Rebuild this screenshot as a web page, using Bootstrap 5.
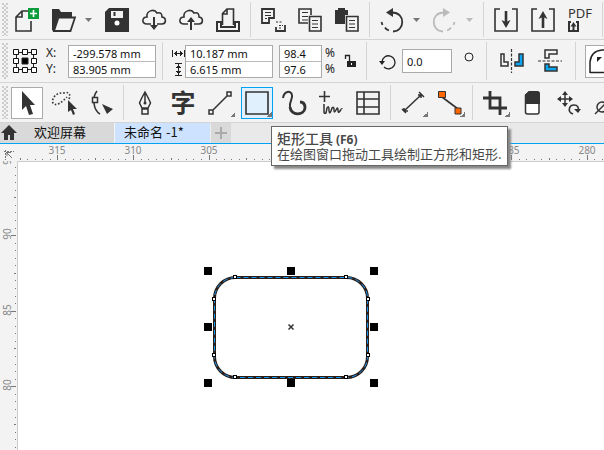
<!DOCTYPE html>
<html lang="zh-CN">
<head>
<meta charset="utf-8">
<meta name="viewport" content="width=device-width, initial-scale=1">
<title>未命名 -1*</title>
<link rel="stylesheet" href="https://cdn.jsdelivr.net/npm/bootstrap@5.3.0/dist/css/bootstrap.min.css">
<style>
:root{--ink:#333;--bar:#f3f3f3;--rule:#d4d4d4;--accent:#00a2f3}
body{font-family:"Noto Sans","Noto Sans CJK SC",sans-serif;font-size:11px;line-height:16px;color:#222;background:var(--bar)}
svg{display:block;overflow:visible}
.strip{background:var(--bar);border-bottom:1px solid var(--rule)}
.grip{width:6px;margin:3px 1px 3px 2px;background:radial-gradient(circle at 1px 1px,#ccc 1px,transparent 1px) 0 0/4px 4px,radial-gradient(circle at 1px 1px,#ccc 1px,transparent 1px) 2px 2px/4px 4px}
.tool{width:32px;height:32px;margin:4px 3px 3px 2px;padding:3px;border:1px solid transparent;border-radius:0;color:var(--ink)}
.tool svg{width:24px;height:24px;fill:none;stroke:currentColor;stroke-width:2}
.tool .solid,.glyph .solid{fill:currentColor;stroke:none}
.tool .thin{stroke-width:1}
.picked{background:#fff;border-color:#aaa}
.active-tool{background:#e0f0fd;border-color:var(--accent)}
.flyout{background-image:linear-gradient(135deg,transparent 50%,#777 50%);background-size:5px 5px;background-position:right 0 bottom 1px;background-repeat:no-repeat}
.caret{width:16px;padding:0 8px 0 1px;color:#777}
.split{width:1px;margin:2px 4px 2px 3px;background:var(--rule)}
.faded,.caret.faded{color:#bbb}
.glyph{fill:none;stroke:currentColor;color:#222}
.fields{border:1px solid #aaa;background:#fff}
.fields input{display:block;width:100%;height:15px;border:0;padding:0 4px;font-size:11px;line-height:15px;color:#111;background:#fff}
.fields input+input{border-top:1px solid #bbb;height:16px}
.wide{width:88px}.slim{width:43px}.angle{width:50px}.fields.angle input{height:22px}
.props{height:43px;font-size:12px}
.props .split{margin:2px 9px}
.props .tool{margin:0}
.axes{width:31px;padding-left:9px}
.percent{width:19px}
.props .s3{margin-left:3px}.props .s6{margin-left:6px}.props .s12{margin-left:12px}
.zi{font-family:"Noto Sans CJK SC",sans-serif;font-size:25px;line-height:24px;font-weight:700;padding-bottom:8px}
.tip{left:32px;top:43px;z-index:5;background:#fff;border:1px solid #666;box-shadow:3px 3px 2px #888;padding:3px 5px;color:#484848;font-size:13px;font-family:"Noto Sans CJK SC",sans-serif}
.tip div{height:16px;line-height:16px}
.tip strong{font-size:14px;font-weight:500}
.tip small{font-size:12px;font-weight:700;font-family:"Noto Sans",sans-serif}
.tabs{height:21px;background:#e9e9e9;border-bottom:1px solid var(--accent);font-family:"Noto Sans CJK SC",sans-serif;font-size:13px}
.tabs a{color:#111;line-height:18px}
.rest{background:#d9d9d9}.open-doc{background:#cce2ff;border-left:1px solid #f4f4f4;width:96px;padding-left:9px}
.welcome{width:96px;padding-left:16px}
.add{width:21px;background:#d9d9d9;border:0;border-left:1px solid #eee}
.desk{display:grid;grid-template:17px 1fr/17px 1fr}
.desk text{font-size:10px;fill:#888;text-anchor:middle}
.desk .tick{fill:#777}
.page{background:#fff;border-left:1px solid #ccc;border-top:1px solid #ccc}
</style>
<script src="https://cdn.jsdelivr.net/npm/bootstrap@5.3.0/dist/js/bootstrap.bundle.min.js"></script>
</head>
<body class="d-flex flex-column vh-100 overflow-hidden">

<!-- Standard toolbar -->
<div class="strip d-flex flex-nowrap overflow-hidden flex-shrink-0" role="toolbar" aria-label="标准">
<span class="grip flex-shrink-0"></span>
<button class="btn tool flex-shrink-0" aria-label="新建"><svg viewBox="0 0 24 24"><path d="M13 3H7L1 9v14h15V13M7 3v6H1" stroke-width="1.6"/><path d="M13 0h11v11H13z" fill="#0c9c3c" stroke="none"/><path d="M18.500 2v7M15 5.500h7" stroke="#fff" stroke-width="1.600"/></svg></button>
<button class="btn tool flex-shrink-0" aria-label="打开"><svg viewBox="0 0 24 24"><path class="solid" d="M0 1h7l2 3h11v5H6L2 24 0 22z"/><path d="M6.500 9.500H23L18.500 23H2z" fill="#f3f3f3" stroke-width="1.800"/></svg></button>
<button class="btn caret flex-shrink-0" aria-label="打开选项"><svg width="7" height="4" fill="currentColor"><path d="M0 0h7L3.500 4z"/></svg></button>
<button class="btn tool flex-shrink-0" aria-label="保存"><svg viewBox="0 0 24 24"><path class="solid" d="M4 0h20v24H0V4z"/><path d="M6 3h12v7H6z" fill="#f3f3f3" stroke="none"/><path d="M9.500 4v4"/><circle cx="12" cy="15" r="2.500" fill="#fff" stroke="none"/></svg></button>
<button class="btn tool flex-shrink-0" aria-label="从云端打开"><svg viewBox="0 0 24 24"><path d="M9 16H5C-1 16 0 9 5 9 4 3 12 0 15 5c4-1 5 1 5 4 5 1 4 7 0 7h-5" stroke-width="1.600"/><path d="M12 9v9"/><path class="solid" d="M8 17h8l-4 5z"/></svg></button>
<button class="btn tool flex-shrink-0" aria-label="保存到云端"><svg viewBox="0 0 24 24"><path d="M9 16H5C-1 16 0 9 5 9 4 3 12 0 15 5c4-1 5 1 5 4 5 1 4 7 0 7h-5" stroke-width="1.600"/><path d="M12 13v9"/><path class="solid" d="M8 14h8l-4-5z"/></svg></button>
<button class="btn tool flex-shrink-0" aria-label="打印"><svg viewBox="0 0 24 24"><path d="M6.500 17V5.500L11 1h6.500v16M11 1v5H6.500" stroke-width="1.600"/><path d="M1 14h4v5h14v-5h4v9H1z"/></svg></button>
<span class="split flex-shrink-0"></span>
<button class="btn tool flex-shrink-0" aria-label="剪切"><svg viewBox="0 0 24 24"><path d="M1 1h12v9H8v5H1z" stroke-width="1.800"/><path d="M4 4.500h6M4 7.500h6M4 10.500h2" class="thin"/><path d="M15 14h7" stroke-width="1.200" stroke-dasharray="2 1.500"/><path d="M24 17v6h-9v-4" stroke-width="1.800"/><path d="M18 17.500h4M18 20h3" stroke-width="1" stroke-dasharray="2 1"/></svg></button>
<button class="btn tool flex-shrink-0" aria-label="复制"><svg viewBox="0 0 24 24"><path d="M10 15H1V1h12v6" stroke-width="1.600"/><path d="M4 4.500h6M4 8.500h6M4 12h6" class="thin"/><path d="M11.500 8.500H23V23H11.500z" stroke-width="1.600"/><path d="M14 12.500h6M14 16h6M14 19.500h6" class="thin"/></svg></button>
<button class="btn tool flex-shrink-0" aria-label="粘贴"><svg viewBox="0 0 24 24"><path class="solid" d="M0 2h3V0h7v2h3v5h-3v9H0z"/><path d="M11.500 8.500H23V23H11.500z" stroke-width="1.600"/><path d="M14 12.500h6M14 16h6M14 19.500h6" class="thin"/></svg></button>
<span class="split flex-shrink-0"></span>
<button class="btn tool flex-shrink-0" aria-label="撤消"><svg viewBox="0 0 24 24"><path d="M12 4.500c14 0 13 19 1 19M9 22.500q-3-1-4-3M2.500 17l-1-3" stroke-width="1.800"/><path class="solid" d="M6 4.500L13 0v9z"/></svg></button>
<button class="btn caret flex-shrink-0" aria-label="撤消选项"><svg width="7" height="4" fill="currentColor"><path d="M0 0h7L3.500 4z"/></svg></button>
<button class="btn tool faded flex-shrink-0" aria-label="重做"><svg viewBox="0 0 24 24"><path d="M11 4.500c-14 0-13 19-1 19M14 22.500q3-1 4-3M20.500 17l1-3" stroke-width="1.800"/><path class="solid" d="M17 4.500L10 0v9z"/></svg></button>
<button class="btn caret faded flex-shrink-0" aria-label="重做选项"><svg width="7" height="4" fill="currentColor"><path d="M0 0h7L3.500 4z"/></svg></button>
<span class="split flex-shrink-0"></span>
<button class="btn tool flex-shrink-0" aria-label="导入"><svg viewBox="0 0 24 24"><path d="M6 1H1v22h22V1h-5" stroke-width="1.600"/><path d="M12 3v11" stroke-width="2.600"/><path class="solid" d="M7.500 12L12 14l4.500-2L12 20z"/></svg></button>
<button class="btn tool flex-shrink-0" aria-label="导出"><svg viewBox="0 0 24 24"><path d="M6 1H1v22h22V1h-5" stroke-width="1.600"/><path d="M12 9v11" stroke-width="2.600"/><path class="solid" d="M7.500 11L12 9l4.500 2L12 3z"/></svg></button>
<button class="btn tool flex-shrink-0" aria-label="发布为 PDF"><svg viewBox="0 0 24 24"><text x="0" y="10" font-size="13" fill="#333" stroke="none">PDF</text><path d="M3 14H1v9h9v-9H8M5.500 17v5"/><path class="solid" d="M2.500 18.500L5.500 14l3 4.500z"/></svg></button>
<span class="split flex-shrink-0"></span>
</div>

<!-- Property bar -->
<div class="strip props d-flex flex-nowrap overflow-hidden align-items-center flex-shrink-0">
<span class="grip align-self-stretch flex-shrink-0"></span>
<svg class="glyph flex-shrink-0 ms-1" width="24" height="24" stroke-width="1"><path d="M3.500 3.500h17v17h-17z"/><g fill="#fff" stroke="#111"><path d="M.500.500h5v5h-5zM9.500.500h5v5h-5zM18.500.500h5v5h-5zM.500 9.500h5v5h-5zM18.500 9.500h5v5h-5zM.500 18.500h5v5h-5zM9.500 18.500h5v5h-5zM18.500 18.500h5v5h-5z"/></g><path d="M9 9h6v6H9z" fill="#000"/></svg>
<div class="axes d-flex flex-column flex-shrink-0"><label for="px">X:</label><label for="py">Y:</label></div>
<div class="fields wide flex-shrink-0"><input id="px" value="-299.578 mm"><input id="py" value="83.905 mm"></div>
<span class="split s6 align-self-stretch flex-shrink-0"></span>
<svg class="glyph flex-shrink-0" width="13" height="32"><path d="M.500 5v7M12.500 5v7M2 8.500h9M4.500 6v5M8.500 6v5M3.500 7v3M9.500 7v3M3 18.500h7M3 30.500h7M6.500 19v11M4 22.500h5M4 26.500h5M5 21.500h3M5 27.500h3"/></svg>
<div class="fields wide flex-shrink-0"><input aria-label="宽度" value="10.187 mm"><input aria-label="高度" value="6.615 mm"></div>
<div class="fields slim flex-shrink-0 s6"><input aria-label="水平缩放" value="98.4"><input aria-label="垂直缩放" value="97.6"></div>
<div class="percent d-flex flex-column flex-shrink-0 s3"><span>%</span><span>%</span></div>
<button class="btn border-0 p-0 flex-shrink-0" aria-label="锁定比率"><svg class="glyph" width="13" height="14"><path d="M1.500 5V1.500h4V7" stroke-width="1.300"/><path class="solid" d="M3 7h9v6H3z"/><path d="M7.500 9v2" stroke="#fff"/></svg></button>
<span class="split align-self-stretch flex-shrink-0"></span>
<svg class="glyph flex-shrink-0 s3" width="17" height="17"><path d="M3 9a6.500 6.500 0 1 1 2 5" stroke-width="1.300"/><path class="solid" d="M0 8h6l-3 4z"/></svg>
<div class="fields angle flex-shrink-0 s6"><input aria-label="旋转角度" value="0.0"></div>
<svg class="glyph flex-shrink-0 mb-2 s12" width="10" height="10"><circle cx="5" cy="5" r="4"/></svg>
<span class="split s12 align-self-stretch flex-shrink-0"></span>
<button class="btn tool flex-shrink-0" aria-label="水平镜像"><svg viewBox="0 0 24 24"><path d="M1 5h3v8h4v4H1z" stroke-width="1.500"/><path d="M23 5h-4v8h-4v4h8z" fill="#0ca7f2" stroke-width="1.500"/><path d="M11.500 0v24" stroke-width="1.200" stroke-dasharray="3 1.500"/></svg></button>
<button class="btn tool flex-shrink-0 s6" aria-label="垂直镜像"><svg viewBox="0 0 24 24"><path d="M7 9V1h12v4h-8v4z" stroke-width="1.500"/><path d="M7 15v7h12v-4h-8v-3z" fill="#0ca7f2" stroke-width="1.500"/><path d="M0 12h24" stroke-width="1.200" stroke-dasharray="3 1.500"/></svg></button>
<span class="split align-self-stretch flex-shrink-0"></span>
<button class="btn p-0 rounded-0 fields flex-shrink-0" aria-label="圆角"><svg class="glyph" width="31" height="31"><path d="M4 27V16Q5 5 16 4h15M4 26.500h27" stroke-width="1.500"/><path class="solid" d="M11 11h5l-5 5z"/></svg></button>
</div>

<!-- Toolbox -->
<div class="strip d-flex flex-nowrap flex-shrink-0" role="toolbar" aria-label="工具箱">
<span class="grip flex-shrink-0"></span>
<button class="btn tool picked flex-shrink-0" aria-label="选择工具"><svg viewBox="0 0 24 24"><path class="solid" d="M7 0v19l4-4 3 9 4-1-3-9h5z"/></svg></button>
<button class="btn tool flex-shrink-0" aria-label="手绘选择"><svg viewBox="0 0 24 24"><path d="M17 8c2-4 0-8-5-6C5 1-1 7 1 12c3 4 9-1 14-6" stroke-width="1.600" stroke-dasharray="1.600 1.800"/><path class="solid" d="M16 9v12l3-2 2 5 2-1-2-5h4z"/></svg></button>
<button class="btn tool flex-shrink-0" aria-label="形状工具"><svg viewBox="0 0 24 24"><path d="M8 0C3 6 4 19 11 23" stroke-width="1.600"/><path d="M3.500 6.500h5v5h-5z" fill="#f3f3f3" stroke-width="1.500"/><path class="solid" d="M13 13l11 5-6 5z"/></svg></button>
<span class="split flex-shrink-0"></span>
<button class="btn tool flex-shrink-0" aria-label="钢笔"><svg viewBox="0 0 24 24"><path d="M11 1Q7 8 5.500 12L8 17h6l2.500-5Q15 8 11 1zM11 2v9M8 18h6v5H8z" stroke-width="1.500"/><circle cx="11" cy="12" r="1.500" class="solid"/></svg></button>
<button class="btn tool zi flex-shrink-0 d-flex justify-content-center align-items-center" aria-label="文本工具">字</button>
<button class="btn tool flyout flex-shrink-0" aria-label="手绘"><svg viewBox="0 0 24 24"><path d="M5 19L19 5M1 19h4v4H1zM19 1h4v4h-4z" stroke-width="1.500"/></svg></button>
<div class="position-relative flex-shrink-0">
<button class="btn tool active-tool flyout" aria-label="矩形工具" aria-describedby="tip"><svg viewBox="0 0 24 24"><path d="M1 1h22v22H1z" stroke-width="1.600"/></svg></button>
<div class="tip position-absolute text-nowrap" id="tip" role="tooltip"><div><strong>矩形工具</strong> <small>(F6)</small></div><div>在绘图窗口拖动工具绘制正方形和矩形.</div></div>
</div>
<button class="btn tool flex-shrink-0" aria-label="曲线"><svg viewBox="0 0 24 24"><path d="M1 7C2 0 9-1 10 4c1 4-3 7-2 12"/><path d="M8 16c1 9 14 9 15 1 0-4-2-6-5-6" stroke-width="2.800"/></svg></button>
<button class="btn tool flex-shrink-0" aria-label="LiveSketch"><svg viewBox="0 0 24 24"><path d="M5.500 0v11M0 5.500h11" stroke-width="1.600"/><path d="M5 13v8q0 2 2 1l1-5q2-3 2 2 0 5 2 1l1-3q2-2 2 2t2 0q2-4 2 0t2 1 2-2" stroke-width="1.500"/></svg></button>
<button class="btn tool flex-shrink-0" aria-label="表格"><svg viewBox="0 0 24 24"><path d="M1 1h22v22H1zM1 8h22M1 16h22M8 1v22" stroke-width="1.600"/></svg></button>
<span class="split flex-shrink-0"></span>
<button class="btn tool flyout flex-shrink-0" aria-label="平行度量"><svg viewBox="0 0 24 24"><path d="M3 20L20 4M1 18l4 4M18 1l5 5M3 17v3h4M17 4h3v3" stroke-width="1.500"/></svg></button>
<button class="btn tool flyout flex-shrink-0" aria-label="连接器"><svg viewBox="0 0 24 24"><path d="M4 6l16 12" stroke-width="1.600"/><path d="M.500.500h7v6h-7zM17 17h6v6h-6z" fill="#f60" stroke-width="1"/></svg></button>
<span class="split flex-shrink-0"></span>
<button class="btn tool flyout flex-shrink-0" aria-label="裁剪"><svg viewBox="0 0 24 24"><path d="M0 7h17v4M17 16v8M24 17H7v-4M7 8V0M7 7v10M17 7v10" stroke-width="2.800"/></svg></button>
<button class="btn tool flex-shrink-0" aria-label="橡皮擦"><svg viewBox="0 0 24 24"><path d="M5.500 13V4L9 1h8q2 0 2 2v18q0 2-2 2H7.500q-2 0-2-2z" fill="#fff" stroke-width="1.500"/><path class="solid" d="M5 13V4l4-4h8q3 0 3 3v10z"/></svg></button>
<button class="btn tool flex-shrink-0" aria-label="自由变换"><svg viewBox="0 0 24 24"><path d="M8 1v14M1 8h14" stroke-width="1.500"/><path class="solid" d="M8 0l3 4H5zM8 16l3-4H5zM0 8l4-3v6zM16 8l-4-3v6z"/><path d="M16 23c-6-2-4-9 1-9 4 0 5 3 4 6" stroke-width="1.600"/><path class="solid" d="M17 18h7l-3 4z"/></svg></button>
<button class="btn tool flex-shrink-0" aria-label="属性滴管"><svg viewBox="0 0 24 24"><circle cx="8" cy="16" r="5" stroke-width="1.500"/><path d="M1 23L16 8" stroke-width="1.500"/></svg></button>
</div>

<!-- Document tabs -->
<nav class="tabs d-flex flex-shrink-0">
<a href="#" class="rest ps-0" aria-label="主页"><svg width="18" height="20"><path d="M9 2l8 8h-3v7h-4v-5H8v5H4v-7H1z" fill="#333"/></svg></a>
<a href="#" class="rest welcome text-decoration-none">欢迎屏幕</a>
<a href="#" class="open-doc text-decoration-none" aria-current="page">未命名 -1*</a>
<button class="add p-0 d-flex justify-content-center align-items-center" aria-label="新建文档"><svg width="12" height="12" stroke="#aaa" stroke-width="2"><path d="M6 0v12M0 6h12"/></svg></button>
</nav>

<!-- Rulers and drawing page -->
<main class="desk flex-grow-1 overflow-hidden">
<svg width="17" height="17" fill="none" stroke="#777"><path d="M4 7.500h10" stroke-dasharray="2 1"/><path d="M5.500 6v10" stroke-dasharray="2 1"/><path d="M6 8l6 6M7 12V8.500h4"/></svg>
<svg id="hruler" class="w-100 overflow-hidden" height="17"></svg>
<svg id="vruler" class="h-100 overflow-hidden" width="17"></svg>
<div class="page overflow-hidden">
<svg width="100%" height="100%"><g transform="translate(-18 -162)" fill="none">
<rect x="214.500" y="277.500" width="153" height="100" rx="21" stroke="#2a1d16" stroke-width="3"/>
<rect x="214.500" y="277.500" width="153" height="100" rx="21" stroke="#1993f0" stroke-width="1" stroke-dasharray="5 3"/>
<path d="M288.500 324.500l5 5M293.500 324.500l-5 5" stroke="#333" stroke-width="1.500"/>
<g id="grips" fill="#000"></g><g id="nodes" fill="#fff" stroke="#000"></g>
</g></svg>
</div>
</main>
<script>
const NS='http://www.w3.org/2000/svg';
function put(parent,tag,attrs,text){const e=document.createElementNS(NS,tag);for(const k in attrs)e.setAttribute(k,attrs[k]);if(text)e.textContent=text;parent.appendChild(e)}
// Five units per labelled division, ten ticks per division; labels under the tooltip are left out
function ruler(id,first,label,vertical,count,covered){
  const r=document.getElementById(id),step=75.6;
  for(let i=-10;i<count;i++){
    const p=Math.floor(first+i*step/10),m=i%10===0,len=m?5:i%5===0?2:1;
    put(r,'rect',vertical?{class:'tick',x:16-len,y:p,width:len,height:1}:{class:'tick',x:p,y:16-len,width:1,height:len});
    const n=label-i/2;
    if(m&&i>=0&&!covered.includes(n))put(r,'text',vertical?{transform:`translate(11 ${p-1}) rotate(-90)`}:{x:p,y:10},n)
  }
}
ruler('hruler',40.9,315,false,79,[300,295,290]);
ruler('vruler',-1,95,true,39,[]);
for(const x of[204,287,370])for(const y of[267,323,379])if(x!==287||y!==323)put(document.getElementById('grips'),'rect',{x,y,width:8,height:8});
for(const [x,y] of[[235,277],[346,277],[214,299],[368,299],[214,355],[368,355],[235,377],[346,377]])put(document.getElementById('nodes'),'rect',{x:x-1.5,y:y-1.5,width:3,height:3});
</script>
</body>
</html>
